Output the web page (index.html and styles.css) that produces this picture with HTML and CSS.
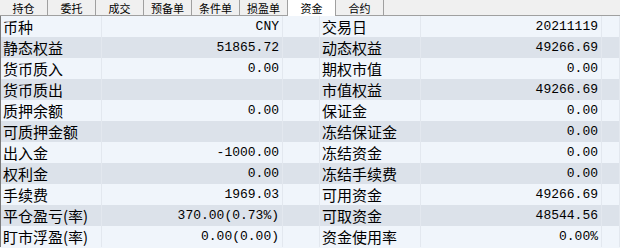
FILE: index.html
```html
<!DOCTYPE html>
<html>
<head>
    <meta charset="UTF-8">
    <title>资金</title>
    <link rel="stylesheet" href="styles.css">
</head>
<body>
    <div class="panel">
        <div class="tabs">
            <span class="tab">持仓</span>
            <span class="tab">委托</span>
            <span class="tab">成交</span>
            <span class="tab">预备单</span>
            <span class="tab">条件单</span>
            <span class="tab">损盈单</span>
            <span class="tab active">资金</span>
            <span class="tab">合约</span>
        </div>
        <table class="fund-table">
            <colgroup>
                <col class="col-label">
                <col class="col-value">
                <col class="col-gap">
                <col class="col-label">
                <col class="col-value">
                <col>
            </colgroup>
            <tr class="odd">
                <td class="label">币种</td><td class="value">CNY</td><td></td>
                <td class="label">交易日</td><td class="value">20211119</td><td></td>
            </tr>
            <tr class="even">
                <td class="label">静态权益</td><td class="value">51865.72</td><td></td>
                <td class="label">动态权益</td><td class="value">49266.69</td><td></td>
            </tr>
            <tr class="odd">
                <td class="label">货币质入</td><td class="value">0.00</td><td></td>
                <td class="label">期权市值</td><td class="value">0.00</td><td></td>
            </tr>
            <tr class="even">
                <td class="label">货币质出</td><td class="value"></td><td></td>
                <td class="label">市值权益</td><td class="value">49266.69</td><td></td>
            </tr>
            <tr class="odd">
                <td class="label">质押余额</td><td class="value">0.00</td><td></td>
                <td class="label">保证金</td><td class="value">0.00</td><td></td>
            </tr>
            <tr class="even">
                <td class="label">可质押金额</td><td class="value"></td><td></td>
                <td class="label">冻结保证金</td><td class="value">0.00</td><td></td>
            </tr>
            <tr class="odd">
                <td class="label">出入金</td><td class="value">-1000.00</td><td></td>
                <td class="label">冻结资金</td><td class="value">0.00</td><td></td>
            </tr>
            <tr class="even">
                <td class="label">权利金</td><td class="value">0.00</td><td></td>
                <td class="label">冻结手续费</td><td class="value">0.00</td><td></td>
            </tr>
            <tr class="odd">
                <td class="label">手续费</td><td class="value">1969.03</td><td></td>
                <td class="label">可用资金</td><td class="value">49266.69</td><td></td>
            </tr>
            <tr class="even">
                <td class="label">平仓盈亏(率)</td><td class="value">370.00(0.73%)</td><td></td>
                <td class="label">可取资金</td><td class="value">48544.56</td><td></td>
            </tr>
            <tr class="odd">
                <td class="label">盯市浮盈(率)</td><td class="value">0.00(0.00)</td><td></td>
                <td class="label">资金使用率</td><td class="value">0.00%</td><td></td>
            </tr>
        </table>
    </div>
</body>
</html>
```

FILE: styles.css
```css
body {
    margin: 0;
    padding: 0;
    background-color: #f0f5fb;
    font-family: "Noto Sans CJK SC", sans-serif;
    color: #000;
}
.panel {
    width: 620px;
    height: 248px;
    overflow: hidden;
    background-color: #f0f5fb;
}
.tabs {
    display: flex;
    height: 15px;
    background-color: #f0f0f0;
    border-bottom: 1px solid #a0a0a0;
}
.tab {
    width: 47px;
    height: 14px;
    padding-top: 1px;
    border-right: 1px solid #a0a0a0;
    font-size: 11px;
    line-height: 14px;
    text-align: center;
}
.tab.active {
    height: 15px;
    background-color: #fff;
    position: relative;
    z-index: 1;
}
.fund-table {
    width: 620px;
    table-layout: fixed;
    border-collapse: collapse;
    border-left: 1px solid #7a7a7a;
}
.col-label {
    width: 101px;
}
.col-value {
    width: 181px;
}
.col-gap {
    width: 37px;
}
.fund-table td {
    height: 21px;
    padding: 0 3px 0 2px;
    border-right: 1px solid #e3e8ef;
    font-size: 15px;
    line-height: 21px;
    white-space: nowrap;
    overflow: hidden;
}
.odd {
    background-color: #f0f5fb;
}
.even {
    background-color: #dce2ea;
}
.fund-table td.value {
    text-align: right;
    font-family: "Liberation Mono", "Noto Sans CJK SC", monospace;
    font-size: 13px;
}
```
